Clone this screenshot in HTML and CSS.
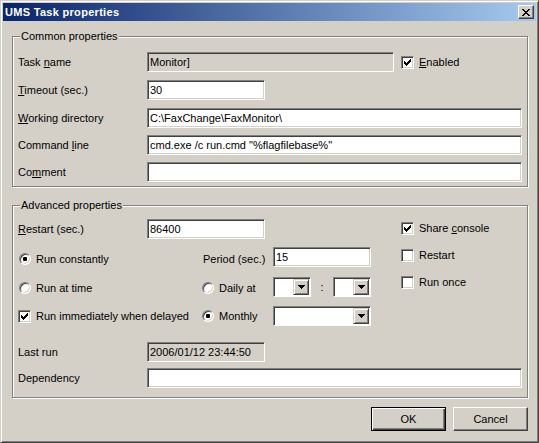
FILE: index.html
```html
<!DOCTYPE html>
<html lang="en">
<head>
  <meta charset="UTF-8">
  <title>UMS Task properties</title>
  <link rel="stylesheet" href="styles.css">
</head>
<body>

<div class="window">
  <div class="titlebar">
    <span class="title">UMS Task properties</span>
    <span class="close-btn">
      <svg width="8" height="7" viewBox="0 0 8 7"><path d="M0 0h2v1H0zM6 0h2v1H6zM1 1h2v1H1zM5 1h2v1H5zM2 2h4v1H2zM3 3h2v1H3zM2 4h4v1H2zM1 5h2v1H1zM5 5h2v1H5zM0 6h2v1H0zM6 6h2v1H6z"/></svg>
    </span>
  </div>

  <div class="client">
    <!-- common properties -->
    <div class="group group-common">
      <span class="caption">Common properties</span>
      <div class="form-grid common-grid">
        <span class="lbl"><span>Task <u>n</u>ame</span></span>
        <div class="ctl-row">
          <input class="field field-ro field-name" value="Monitor]" readonly>
          <span class="check check-enabled">
            <span class="box"><svg width="7" height="7" viewBox="0 0 7 7"><path d="M0 2h1v3H0zM1 3h1v3H1zM2 4h1v3H2zM3 3h1v3H3zM4 2h1v3H4zM5 1h1v3H5zM6 0h1v3H6z"/></svg></span>
            <span><u>E</u>nabled</span>
          </span>
        </div>

        <span class="lbl"><span><u>T</u>imeout (sec.)</span></span>
        <div class="ctl-row"><input class="field field-short" value="30"></div>

        <span class="lbl"><span><u>W</u>orking directory</span></span>
        <div class="ctl-row"><input class="field" value="C:\FaxChange\FaxMonitor\"></div>

        <span class="lbl"><span>Command <u>l</u>ine</span></span>
        <div class="ctl-row"><input class="field" value='cmd.exe /c run.cmd "%flagfilebase%"'></div>

        <span class="lbl"><span>Co<u>m</u>ment</span></span>
        <div class="ctl-row"><input class="field" value=""></div>
      </div>
    </div>

    <!-- advanced properties -->
    <div class="group group-advanced">
      <span class="caption">Advanced properties</span>
      <div class="adv-top">
        <div class="adv-grid">
          <span class="cell col-1"><span><u>R</u>estart (sec.)</span></span>
          <span class="cell col-2"><input class="field field-short" value="86400"></span>

          <span class="cell opt col-1 low"><span class="radio on"></span><span>Run constantly</span></span>
          <span class="cell col-3 period low"><span>Period (sec.)</span></span>
          <span class="cell col-4"><input class="field field-mid" value="15"></span>

          <span class="cell opt col-1 low-1"><span class="radio"></span><span>Run at time</span></span>
          <span class="cell opt col-3 low-1"><span class="radio"></span><span>Daily at</span></span>
          <span class="cell col-4">
            <span class="combo combo-small"><span class="combo-btn"><svg width="7" height="4" viewBox="0 0 7 4"><path d="M0 0h7v1H0zM1 1h5v1H1zM2 2h3v1H2zM3 3h1v1H3z"/></svg></span></span>
            <span class="colon">:</span>
            <span class="combo combo-small"><span class="combo-btn"><svg width="7" height="4" viewBox="0 0 7 4"><path d="M0 0h7v1H0zM1 1h5v1H1zM2 2h3v1H2zM3 3h1v1H3z"/></svg></span></span>
          </span>

          <span class="cell check wide">
            <span class="box"><svg width="7" height="7" viewBox="0 0 7 7"><path d="M0 2h1v3H0zM1 3h1v3H1zM2 4h1v3H2zM3 3h1v3H3zM4 2h1v3H4zM5 1h1v3H5zM6 0h1v3H6z"/></svg></span>
            <span>Run immediately when delayed</span>
          </span>
          <span class="cell opt col-3"><span class="radio on"></span><span>Monthly</span></span>
          <span class="cell col-4">
            <span class="combo combo-wide"><span class="combo-btn"><svg width="7" height="4" viewBox="0 0 7 4"><path d="M0 0h7v1H0zM1 1h5v1H1zM2 2h3v1H2zM3 3h1v1H3z"/></svg></span></span>
          </span>
        </div>

        <div class="adv-checks">
          <span class="check">
            <span class="box"><svg width="7" height="7" viewBox="0 0 7 7"><path d="M0 2h1v3H0zM1 3h1v3H1zM2 4h1v3H2zM3 3h1v3H3zM4 2h1v3H4zM5 1h1v3H5zM6 0h1v3H6z"/></svg></span>
            <span>Share <u>c</u>onsole</span>
          </span>
          <span class="check"><span class="box"></span><span>Restart</span></span>
          <span class="check"><span class="box"></span><span>Run once</span></span>
        </div>
      </div>

      <div class="form-grid adv-bottom">
        <span class="lbl"><span>Last run</span></span>
        <div class="ctl-row"><input class="field field-ro field-short" value="2006/01/12 23:44:50" readonly></div>

        <span class="lbl"><span>Dependency</span></span>
        <div class="ctl-row"><input class="field" value=""></div>
      </div>
    </div>

    <div class="buttons">
      <button class="btn btn-default">OK</button>
      <button class="btn">Cancel</button>
    </div>
  </div>
</div>

</body>
</html>
```

FILE: styles.css
```css
body {
  margin: 0;
  font-family: "Liberation Sans", Arial, sans-serif;
  font-size: 11px;
  line-height: 13px;
  color: #000;
  background: #d4d0c8;
}

.window {
  width: 539px;
  height: 443px;
  box-sizing: border-box;
  padding: 2px;
  background: #d4d0c8;
  border: 1px solid;
  border-color: #d4d0c8 #404040 #404040 #d4d0c8;
  box-shadow: inset 1px 1px #fff, inset -1px -1px #808080;
}

.titlebar {
  height: 18px;
  display: flex;
  align-items: center;
  justify-content: space-between;
  padding-left: 2px;
  background: linear-gradient(to right, #0a246a, #a6caf0);
}

.title {
  color: #fff;
  font-weight: bold;
  letter-spacing: 0.3px;
}

.close-btn {
  width: 16px;
  height: 14px;
  box-sizing: border-box;
  margin-right: 2px;
  display: flex;
  align-items: center;
  justify-content: center;
  background: #d4d0c8;
  border: 1px solid;
  border-color: #fff #404040 #404040 #fff;
  box-shadow: inset -1px -1px #808080;
}

.client {
  padding: 15px 8px 0 9px;
}

/* etched group box */
.group {
  position: relative;
  width: 516px;
  box-sizing: border-box;
  border: 1px solid #808080;
  box-shadow: inset 1px 1px #fff, 1px 1px #fff;
}

.group-common {
  padding: 15px 5px 4px 5px;
}

.group-advanced {
  margin-top: 18px;
  padding: 13px 5px 9px 5px;
}

.caption {
  position: absolute;
  top: -7px;
  left: 7px;
  padding: 0 1px;
  background: #d4d0c8;
}

.form-grid {
  display: grid;
  grid-template-columns: 129px 1fr;
  align-items: start;
  row-gap: 7px;
}

.common-grid {
  grid-template-rows: 21px 21px 20px 20px 20px;
}

.adv-bottom {
  margin-top: 16px;
  grid-template-rows: 20px 20px;
  row-gap: 6px;
}

.lbl,
.ctl-row {
  height: 20px;
  display: flex;
  align-items: center;
}

/* sunken edit field */
.field {
  width: 100%;
  height: 20px;
  box-sizing: border-box;
  margin: 0;
  padding: 0 2px;
  font: inherit;
  color: #000;
  background: #fff;
  border: 1px solid;
  border-color: #808080 #fff #fff #808080;
  box-shadow: inset 1px 1px #404040, inset -1px -1px #d4d0c8;
  outline: none;
}

.field-ro {
  background: #d4d0c8;
}

.field-name {
  width: 247px;
  flex: none;
}

.field-short {
  width: 118px;
}

.field-mid {
  width: 98px;
}

.check-enabled {
  margin-left: 7px;
}

/* checkbox */
.check {
  display: flex;
  align-items: center;
  gap: 5px;
}

.box {
  width: 13px;
  height: 13px;
  flex: none;
  box-sizing: border-box;
  display: flex;
  align-items: center;
  justify-content: center;
  background: #fff;
  border: 1px solid;
  border-color: #808080 #fff #fff #808080;
  box-shadow: inset 1px 1px #404040, inset -1px -1px #d4d0c8;
}

/* radio button */
.opt {
  display: flex;
  align-items: center;
  gap: 5px;
}

.radio {
  width: 12px;
  height: 12px;
  flex: none;
  margin-left: 1px;
  box-sizing: border-box;
  border-radius: 50%;
  display: flex;
  align-items: center;
  justify-content: center;
  background: #fff;
  border: 1px solid;
  border-color: #808080 #fff #fff #808080;
  box-shadow: inset 1px 1px #404040, inset -1px -1px #d4d0c8;
}

.radio.on::after {
  content: "";
  width: 4px;
  height: 4px;
  border-radius: 1px;
  background: #000;
}

/* advanced layout */
.adv-top {
  display: flex;
}

.adv-grid {
  display: grid;
  grid-template-columns: 129px 54px 72px 98px;
  grid-template-rows: 28px 30px 29px 20px;
  align-items: start;
}

.cell {
  height: 20px;
  display: flex;
  align-items: center;
}

.col-1 {
  grid-column: 1;
}

.col-2 {
  grid-column: 2 / span 2;
}

.col-3 {
  grid-column: 3;
}

.col-4 {
  grid-column: 4;
}

.wide {
  grid-column: 1 / span 2;
}

.low {
  padding-top: 4px;
  box-sizing: border-box;
}

.low-1 {
  padding-top: 2px;
  box-sizing: border-box;
}

.period {
  padding-left: 2px;
}

.adv-checks {
  display: flex;
  flex-direction: column;
  gap: 14px;
  margin: 3px 0 0 30px;
}

.adv-checks .check {
  height: 13px;
}

/* combo box */
.combo {
  height: 20px;
  box-sizing: border-box;
  padding: 1px;
  display: flex;
  justify-content: flex-end;
  background: #fff;
  border: 1px solid;
  border-color: #808080 #fff #fff #808080;
  box-shadow: inset 1px 1px #404040;
}

.combo-small {
  width: 38px;
}

.combo-wide {
  width: 98px;
}

.combo-btn {
  width: 16px;
  height: 16px;
  box-sizing: border-box;
  display: flex;
  align-items: center;
  justify-content: center;
  background: #d4d0c8;
  border: 1px solid;
  border-color: #d4d0c8 #404040 #404040 #d4d0c8;
  box-shadow: inset 1px 1px #fff, inset -1px -1px #808080;
}

.colon {
  width: 22px;
  text-align: center;
}

/* push buttons */
.buttons {
  display: flex;
  justify-content: flex-end;
  gap: 7px;
  margin-top: 9px;
}

.btn {
  width: 75px;
  height: 24px;
  box-sizing: border-box;
  padding: 0;
  font: inherit;
  color: #000;
  background: #d4d0c8;
  border: 1px solid;
  border-color: #fff #404040 #404040 #fff;
  box-shadow: inset -1px -1px #808080;
}

.btn-default {
  border-color: #000;
  box-shadow: inset 1px 1px #fff, inset -1px -1px #404040, inset -2px -2px #808080;
}
```
